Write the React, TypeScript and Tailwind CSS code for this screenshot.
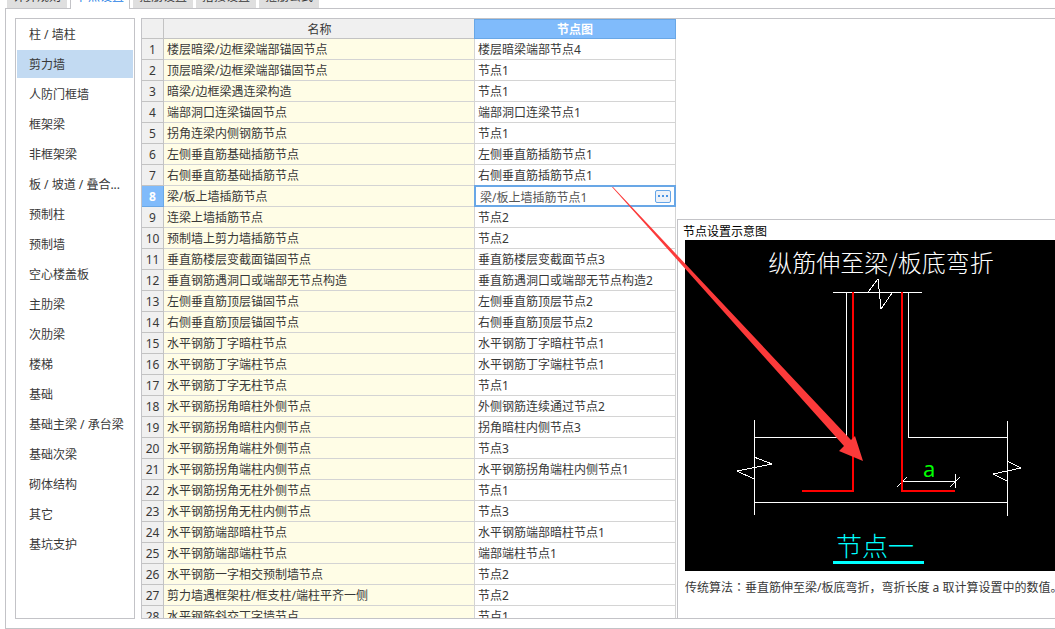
import React, { useState } from "react";

const tabs = ["计算规则", "节点设置", "箍筋设置", "搭接设置", "箍筋公式"];

const categories = [
  "柱 / 墙柱",
  "剪力墙",
  "人防门框墙",
  "框架梁",
  "非框架梁",
  "板 / 坡道 / 叠合...",
  "预制柱",
  "预制墙",
  "空心楼盖板",
  "主肋梁",
  "次肋梁",
  "楼梯",
  "基础",
  "基础主梁 / 承台梁",
  "基础次梁",
  "砌体结构",
  "其它",
  "基坑支护",
];

const rows: [string, string][] = [
  ["楼层暗梁/边框梁端部锚固节点", "楼层暗梁端部节点4"],
  ["顶层暗梁/边框梁端部锚固节点", "节点1"],
  ["暗梁/边框梁遇连梁构造", "节点1"],
  ["端部洞口连梁锚固节点", "端部洞口连梁节点1"],
  ["拐角连梁内侧钢筋节点", "节点1"],
  ["左侧垂直筋基础插筋节点", "左侧垂直筋插筋节点1"],
  ["右侧垂直筋基础插筋节点", "右侧垂直筋插筋节点1"],
  ["梁/板上墙插筋节点", "梁/板上墙插筋节点1"],
  ["连梁上墙插筋节点", "节点2"],
  ["预制墙上剪力墙插筋节点", "节点2"],
  ["垂直筋楼层变截面锚固节点", "垂直筋楼层变截面节点3"],
  ["垂直钢筋遇洞口或端部无节点构造", "垂直筋遇洞口或端部无节点构造2"],
  ["左侧垂直筋顶层锚固节点", "左侧垂直筋顶层节点2"],
  ["右侧垂直筋顶层锚固节点", "右侧垂直筋顶层节点2"],
  ["水平钢筋丁字暗柱节点", "水平钢筋丁字暗柱节点1"],
  ["水平钢筋丁字端柱节点", "水平钢筋丁字端柱节点1"],
  ["水平钢筋丁字无柱节点", "节点1"],
  ["水平钢筋拐角暗柱外侧节点", "外侧钢筋连续通过节点2"],
  ["水平钢筋拐角暗柱内侧节点", "拐角暗柱内侧节点3"],
  ["水平钢筋拐角端柱外侧节点", "节点3"],
  ["水平钢筋拐角端柱内侧节点", "水平钢筋拐角端柱内侧节点1"],
  ["水平钢筋拐角无柱外侧节点", "节点1"],
  ["水平钢筋拐角无柱内侧节点", "节点3"],
  ["水平钢筋端部暗柱节点", "水平钢筋端部暗柱节点1"],
  ["水平钢筋端部端柱节点", "端部端柱节点1"],
  ["水平钢筋一字相交预制墙节点", "节点2"],
  ["剪力墙遇框架柱/框支柱/端柱平齐一侧", "节点2"],
  ["水平钢筋斜交丁字墙节点", "节点1"],
];

const activeRow = 7;

function Tabs() {
  return (
    <nav role="tablist" className="ml-[7px] flex h-2 shrink-0 items-end gap-[3px]">
      {tabs.map((label, i) => (
        <button
          key={label}
          role="tab"
          aria-selected={i === 1}
          className={
            i === 1
              ? "relative -mb-px h-[23px] w-[60px] shrink-0 border-x border-[#c3c3c7] bg-white pb-px text-[#1e7ee6]"
              : "h-[22px] w-[60px] shrink-0 bg-[#dfdfdf]"
          }
        >
          {label}
        </button>
      ))}
    </nav>
  );
}

function Sidebar() {
  const [selected, setSelected] = useState(1);
  return (
    <aside className="flex w-[120px] shrink-0 flex-col gap-0.5 border border-[#c3c3c7] p-px">
      {categories.map((name, i) => (
        <button
          key={name}
          onClick={() => setSelected(i)}
          className={
            i === selected
              ? "h-7 shrink-0 whitespace-nowrap bg-[#c2daf2] pl-3 pt-0.5 text-left"
              : "h-7 shrink-0 whitespace-nowrap pl-3 pt-0.5 text-left"
          }
        >
          {name}
        </button>
      ))}
    </aside>
  );
}

function NodeCell({ value, label }: { value: string; label: string }) {
  const [text, setText] = useState(value);
  return (
    <td className="relative h-[21px] p-0">
      <div className="absolute -left-px -top-px right-0 bottom-0 flex items-center border-2 border-[#69a7e6] bg-white pl-1 pr-[3px]">
        <input
          aria-label={label}
          value={text}
          onChange={(e) => setText(e.target.value)}
          className="h-[18px] min-w-0 flex-1 bg-transparent pt-0.5 text-[#555] outline-none"
        />
        <button
          aria-label="选择节点图"
          className="flex h-[13px] w-4 items-center justify-center gap-0.5 rounded-xs border border-[#64a5e8] bg-[#edf2f9]"
        >
          <span className="size-0.5 bg-[#4a94e4]" />
          <span className="size-0.5 bg-[#4a94e4]" />
          <span className="size-0.5 bg-[#4a94e4]" />
        </button>
      </div>
    </td>
  );
}

function NodeTable() {
  return (
    <table className="w-[534px] table-fixed border-separate border-spacing-0">
      <colgroup>
        <col className="w-[22px]" />
        <col />
        <col className="w-[201px]" />
      </colgroup>
      <thead>
        <tr>
          <th className="h-5 border-b border-r border-[#c3c3c3] bg-[#f0f0f0] p-0" />
          <th className="h-5 border-b border-[#c3c3c3] bg-[#f0f0f0] p-0 pt-0.5 font-normal">名称</th>
          <th className="relative h-5 p-0 font-bold text-white">
            <div className="absolute -left-px bottom-0 right-0 top-0 flex items-center justify-center border border-[#69a7e6] bg-[#80bbfb] pt-0.5">
              节点图
            </div>
          </th>
        </tr>
      </thead>
      <tbody>
        {rows.map(([name, value], i) => (
          <tr key={name}>
            <th
              scope="row"
              className={
                i === activeRow
                  ? "relative h-[21px] border-b border-r border-[#69a7e6] bg-[#80bbfb] p-0 pt-0.5 font-bold text-white"
                  : "h-[21px] border-b border-r border-[#c3c3c3] bg-[#f0f0f0] p-0 pt-0.5 font-normal"
              }
            >
              {i + 1}
            </th>
            <td className="h-[21px] border-b border-r border-[#d4d4d4] bg-[#fffde6] p-0 pl-[3px] pt-0.5">{name}</td>
            {i === activeRow ? (
              <NodeCell value={value} label={name} />
            ) : (
              <td className="h-[21px] border-b border-r border-[#d4d4d4] p-0 pl-[3px] pt-0.5">{value}</td>
            )}
          </tr>
        ))}
      </tbody>
    </table>
  );
}

function Diagram() {
  return (
    <svg
      width="370"
      height="331"
      viewBox="0 0 370 331"
      fill="none"
      className="shrink-0 font-['Noto_Sans_CJK_SC',sans-serif]"
      role="img"
      aria-label="纵筋伸至梁/板底弯折"
    >
      <text x="196" y="32" fontSize="24" fontWeight="300" fill="#fff" textAnchor="middle">
        纵筋伸至梁/板底弯折
      </text>
      <g stroke="#fff" shapeRendering="crispEdges">
        <path d="M148 52.5H237M161.5 52V197.5H69M223.5 52V197.5H322" />
        <path d="M69.5 180V275M322.5 181V276M69 262.5H322" />
        <path d="M183 52L193 39L196 69L207 53" />
        <path d="M69 217L87 224L52 231L69 239" />
        <path d="M322 221L336 228L308 234L322 241" />
        <path d="M217 241.5H270M270.5 234V248M212 247L222 237M265 247L275 237" />
      </g>
      <path d="M168 52V251H117M217 52V251H270" stroke="#f00" strokeWidth="2" shapeRendering="crispEdges" />
      <text x="238" y="237" fontSize="22" fill="#0f0" className="font-['Noto_Sans',sans-serif]">
        a
      </text>
      <text x="151" y="316" fontSize="26" fontWeight="300" fill="#0ff">
        节点一
      </text>
      <path d="M148 322.5H239" stroke="#0ff" strokeWidth="3" shapeRendering="crispEdges" />
    </svg>
  );
}

function Preview() {
  return (
    <section className="ml-px min-w-0 flex-1 self-end overflow-hidden border-l border-t border-[#c3c3c7] bg-white">
      <h2 className="h-5 pl-[5px] pt-1 text-black">节点设置示意图</h2>
      <div className="ml-[7px] flex overflow-hidden bg-black">
        <Diagram />
      </div>
      <p className="h-[47px] whitespace-nowrap pl-[7px] pt-2">
        传统算法<span className="font-['Noto_Sans_CJK_JP',sans-serif]">：</span>
        垂直筋伸至梁/板底弯折，弯折长度 a 取计算设置中的数值。
      </p>
    </section>
  );
}

export default function App() {
  return (
    <div className="flex h-screen flex-col overflow-hidden bg-white font-['Noto_Sans','Noto_Sans_CJK_SC',sans-serif] text-[12px] leading-4 text-[#383838]">
      <Tabs />
      <main className="ml-[5px] flex min-h-0 flex-1 gap-1.5 border-b border-l border-t border-[#c3c3c7] py-[9px] pl-[9px]">
        <Sidebar />
        <div className="relative flex min-w-0 flex-1 overflow-hidden border-b border-l border-t border-[#c3c3c7]">
          <div className="shrink-0 overflow-hidden">
            <NodeTable />
          </div>
          <Preview />
          <svg
            width="252"
            height="275"
            viewBox="0 0 252 275"
            className="pointer-events-none absolute left-[470px] top-[168px]"
            aria-hidden="true"
          >
            <path d="M0 0L1 0L239 253L243 249L251 274L227 264L232 259Z" fill="#fb3a3a" />
          </svg>
        </div>
      </main>
    </div>
  );
}
